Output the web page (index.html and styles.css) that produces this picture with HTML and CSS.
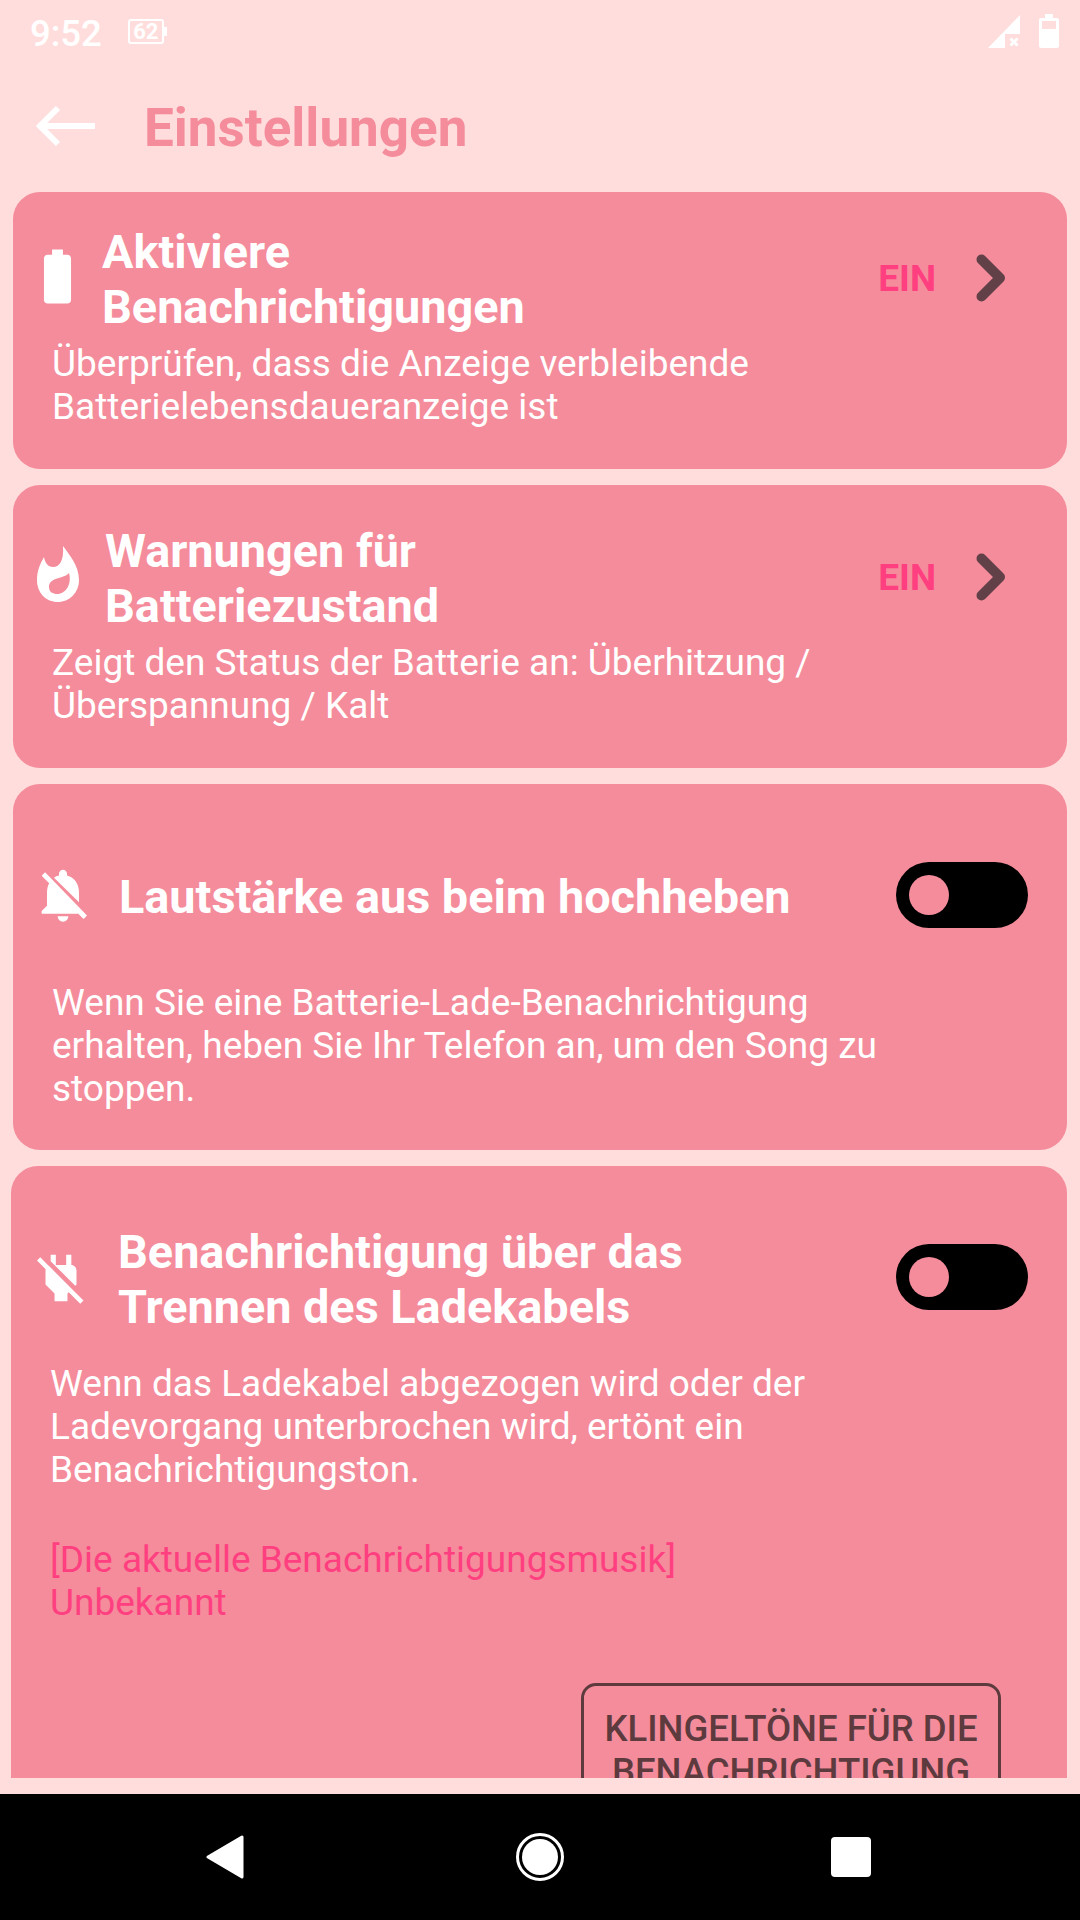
FILE: index.html
```html
<!DOCTYPE html>
<html lang="de">
<head>
    <meta charset="UTF-8">
    <title>Einstellungen</title>
    <link rel="stylesheet" href="styles.css">
</head>
<body>
    <div class="screen">
        <div class="status-bar">
            <span class="clock">9:52</span>
            <span class="battery-saver">
                <span class="battery-saver-box">62</span>
                <span class="battery-saver-tip"></span>
            </span>
            <span class="status-right">
                <svg class="signal" viewBox="0 0 32 33"><path d="M32 0V19H17V33H0Z"/><path d="M22.500 23.500l7 7m0-7l-7 7" fill="none" stroke="#fff" stroke-width="3"/></svg>
                <svg class="status-battery" viewBox="0 0 20 34"><path fill-rule="evenodd" d="M6 0H14V4H18Q20 4 20 6V32Q20 34 18 34H2Q0 34 0 32V6Q0 4 2 4H6ZM3 7V15H17V7Z"/></svg>
            </span>
        </div>

        <div class="toolbar">
            <svg class="back" viewBox="0 0 60 42"><path d="M59 21H5M22 3L4 21l18 18" fill="none" stroke="#fff" stroke-width="6"/></svg>
            <h1>Einstellungen</h1>
        </div>

        <div class="list">
            <div class="card">
                <div class="card-head">
                    <svg class="icon" viewBox="0 0 24 24"><path d="M15.670 4H14V2h-4v2H8.330C7.600 4 7 4.600 7 5.330v15.330C7 21.400 7.600 22 8.330 22h7.330c.74 0 1.340-.6 1.340-1.330V5.330C17 4.600 16.400 4 15.670 4z"/></svg>
                    <div class="card-title">Aktiviere<br>Benachrichtigungen</div>
                    <span class="state">EIN</span>
                    <svg class="chevron" viewBox="0 0 30 48"><path d="M5.500 5.500L24 24 5.500 42.500" fill="none" stroke="#614048" stroke-width="10" stroke-linecap="round" stroke-linejoin="round"/></svg>
                </div>
                <p class="card-text">Überprüfen, dass die Anzeige verbleibende Batterielebensdaueranzeige ist</p>
            </div>

            <div class="card card-health">
                <div class="card-head">
                    <svg class="icon icon-flame" viewBox="0 0 44 56"><path fill-rule="evenodd" d="M27 0C32 7 43 19 43 34 43 47 33 56 22 56 10 56 1 47 1 34 1 25 4 18 8 11 9 17 12 21 17 21 24 21 28 14 27 0ZM33 27C28 33 13 31 13 41 13 46 17 48 21 48 30 48 36 38 33 27Z"/></svg>
                    <div class="card-title">Warnungen für<br>Batteriezustand</div>
                    <span class="state">EIN</span>
                    <svg class="chevron" viewBox="0 0 30 48"><path d="M5.500 5.500L24 24 5.500 42.500" fill="none" stroke="#614048" stroke-width="10" stroke-linecap="round" stroke-linejoin="round"/></svg>
                </div>
                <p class="card-text">Zeigt den Status der Batterie an: Überhitzung / Überspannung / Kalt</p>
            </div>

            <div class="card card-lift">
                <div class="card-head">
                    <svg class="icon icon-bell" viewBox="0 0 24 24"><path d="M20 18.690L7.840 6.140 5.270 3.490 4 4.760l2.800 2.800v.01c-.52.99-.8 2.160-.8 3.420v5l-2 2v1h13.730l2 2L21 19.720l-1-1.030zM12 22c1.110 0 2-.89 2-2h-4c0 1.110.89 2 2 2zm6-7.320V11c0-3.080-1.640-5.640-4.500-6.320V4c0-.83-.67-1.500-1.500-1.500s-1.500.67-1.500 1.500v.68c-.15.03-.29.08-.42.12-.1.03-.2.07-.3.11h-.01c-.2.08-.4.17-.59.27-.2.1-.38.21-.56.33L18 14.680z"/></svg>
                    <div class="card-title">Lautstärke aus beim hochheben</div>
                    <span class="toggle"><span class="knob"></span></span>
                </div>
                <p class="card-text">Wenn Sie eine Batterie-Lade-Benachrichtigung erhalten, heben Sie Ihr Telefon an, um den Song zu stoppen.</p>
            </div>

            <div class="card card-unplug">
                <div class="card-head">
                    <svg class="icon icon-plug" viewBox="0 0 24 24"><path d="M18 14.490V9c0-1-1.010-2.010-2-2V3h-2v4h-4V3H8v2.480l9.510 9.500.49-.49zm-1.760 1.770L7.200 7.200l-.01.01L3.980 4 2.710 5.250l3.360 3.360C6.040 8.740 6 8.870 6 9v5.480L9.500 18v3h5v-3l.48-.48L19.450 22l1.260-1.280-4.470-4.460z"/></svg>
                    <div class="card-title">Benachrichtigung über das<br>Trennen des Ladekabels</div>
                    <span class="toggle"><span class="knob"></span></span>
                </div>
                <p class="card-text">Wenn das Ladekabel abgezogen wird oder der Ladevorgang unterbrochen wird, ertönt ein Benachrichtigungston.</p>
                <p class="card-text current-song">[Die aktuelle Benachrichtigungsmusik]<br>Unbekannt</p>
                <button class="ringtone" type="button">KLINGELTÖNE FÜR DIE BENACHRICHTIGUNG</button>
            </div>
        </div>

        <div class="list-end"></div>

        <div class="nav-bar">
            <svg class="nav-back" viewBox="0 0 38 44"><path d="M36 2V42L2 22Z" stroke="#fff" stroke-width="3" stroke-linejoin="round"/></svg>
            <span class="nav-home"><span class="nav-home-dot"></span></span>
            <span class="nav-recent"></span>
        </div>
    </div>
</body>
</html>
```

FILE: styles.css
```css
* {
    box-sizing: border-box;
}
body {
    margin: 0;
    font-family: Roboto, sans-serif;
    background-color: #ffdddc;
}
.screen {
    height: 1920px;
    display: flex;
    flex-direction: column;
    overflow: hidden;
}
.status-bar {
    height: 72px;
    flex: none;
    display: flex;
    align-items: center;
    padding: 0 21px 10px 30px;
    color: #fff;
}
.clock {
    font-size: 36.5px;
    line-height: 42px;
    font-weight: 500;
    margin-top: 6px;
}
.battery-saver {
    display: flex;
    align-items: center;
    margin-left: 26px;
}
.battery-saver-box {
    width: 36px;
    height: 25px;
    border: 2px solid #fff;
    border-radius: 3px;
    font-size: 22px;
    line-height: 21px;
    font-weight: 700;
    text-align: center;
}
.battery-saver-tip {
    width: 3px;
    height: 9px;
    background-color: #fff;
}
.status-right {
    margin-left: auto;
    display: flex;
    align-items: center;
    gap: 19px;
}
.signal {
    width: 32px;
    height: 33px;
    fill: #fff;
}
.status-battery {
    width: 20px;
    height: 34px;
    fill: #fff;
}
.toolbar {
    height: 120px;
    flex: none;
    display: flex;
    align-items: center;
    padding: 0 0 8px 36px;
}
.back {
    width: 60px;
    height: 42px;
    margin-bottom: 5px;
}
h1 {
    margin: 0 0 0 48px;
    font-size: 53px;
    font-weight: 700;
    color: #f48c9b;
}
.list {
    height: 1586px;
    flex: none;
    overflow: hidden;
    display: flex;
    flex-direction: column;
    gap: 16px;
    padding: 0 13px;
}
.list-end {
    height: 16px;
    flex: none;
}
.card {
    flex: none;
    background-color: #f48c9b;
    border-radius: 27px;
    color: #fff;
    padding: 32px 39px 41px;
}
.card-head {
    display: flex;
    align-items: center;
    margin: 0 -39px;
}
.card-title {
    flex: 1;
    padding-top: 1px;
    font-size: 46.8px;
    line-height: 55px;
    font-weight: 700;
}
.card-text {
    margin: 7px 0 0;
    padding-right: 80px;
    font-size: 37px;
    line-height: 43px;
}
.icon {
    flex: none;
    width: 65px;
    height: 65px;
    fill: #fff;
    margin: 0 12px 6px 12px;
}
.icon-flame {
    width: 44px;
    height: 56px;
    margin: 0 25px 9px 23px;
}
.icon-bell {
    width: 64px;
    height: 64px;
    margin: 0 24px 0 18px;
}
.icon-plug {
    width: 62px;
    height: 62px;
    margin: 0 26px 4px 19px;
}
.state {
    font-size: 37px;
    font-weight: 700;
    color: #ff3f80;
    margin: 0 40px 2px 0;
}
.chevron {
    width: 30px;
    height: 48px;
    margin: 0 61px 4px 0;
}
.toggle {
    flex: none;
    width: 132px;
    height: 66px;
    margin-right: 39px;
    padding: 13px;
    border-radius: 33px;
    background-color: #000;
}
.knob {
    display: block;
    width: 40px;
    height: 40px;
    border-radius: 50%;
    background-color: #f48c9b;
}
.card-health {
    padding-top: 38px;
}
.card-lift {
    padding: 78px 39px 40px;
}
.card-lift .card-title {
    padding-top: 4px;
}
.card-lift .card-text {
    margin-top: 53px;
}
.card-unplug {
    margin-left: -2px;
    padding: 58px 39px 0;
}
.card-unplug .toggle {
    margin-bottom: 6px;
}
.card-unplug .card-text {
    margin-top: 27px;
}
.card-unplug .current-song {
    margin-top: 47px;
    color: #ff3f80;
}
.ringtone {
    display: block;
    width: 420px;
    margin: 59px 27px 0 auto;
    padding: 21px 16px;
    border: 3px solid #5d3a3e;
    border-radius: 15px;
    background: none;
    font-family: Roboto, sans-serif;
    font-size: 36.5px;
    line-height: 43px;
    font-weight: 500;
    color: #5d3a3e;
}
.nav-bar {
    flex: 1;
    position: relative;
    background-color: #000;
}
.nav-back {
    position: absolute;
    left: 206px;
    top: 41px;
    width: 38px;
    height: 44px;
    fill: #fff;
}
.nav-home {
    position: absolute;
    left: 516px;
    top: 39px;
    width: 48px;
    height: 48px;
    border: 3px solid #fff;
    border-radius: 50%;
    padding: 3px;
}
.nav-home-dot {
    display: block;
    width: 36px;
    height: 36px;
    border-radius: 50%;
    background-color: #fff;
}
.nav-recent {
    position: absolute;
    left: 831px;
    top: 43px;
    width: 40px;
    height: 40px;
    border-radius: 4px;
    background-color: #fff;
}
```
